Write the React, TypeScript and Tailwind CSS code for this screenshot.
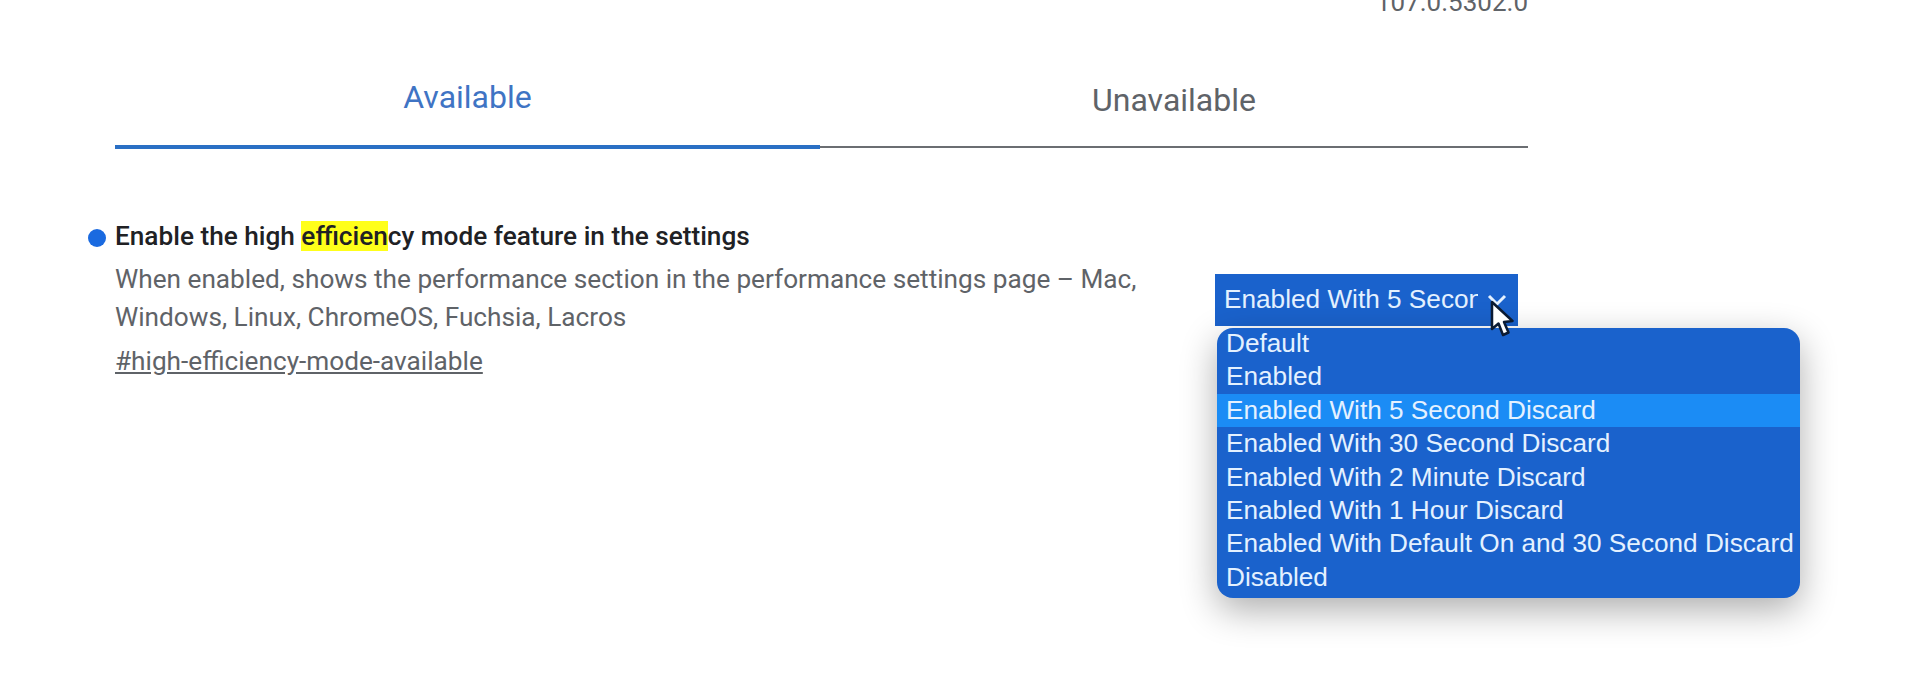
const options = [
  "Default",
  "Enabled",
  "Enabled With 5 Second Discard",
  "Enabled With 30 Second Discard",
  "Enabled With 2 Minute Discard",
  "Enabled With 1 Hour Discard",
  "Enabled With Default On and 30 Second Discard",
  "Disabled",
];

function Cursor() {
  return (
    <svg width="28" height="42" viewBox="0 0 28 42" className="absolute left-[1489px] top-[300px]">
      <path
        d="M3 2 L3 29 L9.5 23.5 L14 35 L19.5 32.5 L15 22 L23.5 21 Z"
        fill="#fff"
        stroke="#0b1b33"
        strokeWidth="2.5"
        strokeLinejoin="round"
      />
    </svg>
  );
}

export default function App() {
  return (
    <div className="relative h-[674px] w-[1920px] overflow-hidden bg-white font-['Roboto',sans-serif]">
      <div className="ml-[115px] w-[1413px]">
        <div className="-mt-[8px] h-[20px] text-right text-[26px] leading-[20px] text-[#5f6368]">107.0.5302.0</div>

        <div className="mt-[67px] flex">
          <div className="flex h-[70px] w-[705px] items-start justify-center border-b-[4px] border-[#2a6fc4] text-[32px] leading-[36px] text-[#3f74c4]">
            Available
          </div>
          <div className="flex h-[69px] w-[708px] items-start justify-center border-b-[2px] border-[#6b6e72] pt-[3px] text-[32px] leading-[36px] text-[#5f6368]">
            Unavailable
          </div>
        </div>

        <div className="mt-[69px] flex">
          <div className="relative w-[1100px]">
            <span className="absolute -left-[27px] top-[11px] h-[18px] w-[18px] rounded-full bg-[#1a6ae0]" />
            <h3 className="text-[26.2px] leading-[36px] font-medium text-[#202124]">
              Enable the high <mark className="bg-[#ffff1a] text-[#202124]">efficien</mark>cy mode feature in the settings
            </h3>
            <p className="mt-[6px] w-[1060px] text-[26.2px] leading-[38px] text-[#5f6368]">
              When enabled, shows the performance section in the performance settings page – Mac, Windows, Linux, ChromeOS, Fuchsia, Lacros
            </p>
            <a className="mt-[7px] block text-[26.2px] leading-[36px] text-[#5f6368] underline">#high-efficiency-mode-available</a>
          </div>
          <div className="mt-[56px] flex h-[52px] w-[303px] items-center overflow-hidden bg-[#1a62cc] pl-[9px] font-['Liberation_Sans',sans-serif] text-[26.2px] text-[#e4f1ff]">
            <span className="w-[254px] shrink-0 overflow-hidden whitespace-nowrap">Enabled With 5 Second Discard</span>
            <svg width="20" height="14" viewBox="0 0 20 14" className="ml-[9px] shrink-0">
              <path d="M2 3 L10 11 L18 3" fill="none" stroke="#e4f1ff" strokeWidth="3" />
            </svg>
          </div>
        </div>
      </div>

      <div className="absolute left-[1217px] top-[328px] h-[270px] w-[583px] overflow-hidden rounded-[16px] bg-[#1a62cc] font-['Liberation_Sans',sans-serif] text-[26.2px] leading-[33.4px] text-[#e4f1ff] shadow-[0_12px_36px_rgba(0,0,0,0.32)]">
        <ul className="-mt-[1px]">
          {options.map((o) => (
            <li key={o} className={o === "Enabled With 5 Second Discard" ? "bg-[#1b8cf5] pl-[9px] whitespace-nowrap" : "pl-[9px] whitespace-nowrap"}>
              {o}
            </li>
          ))}
        </ul>
      </div>
      <Cursor />
    </div>
  );
}
